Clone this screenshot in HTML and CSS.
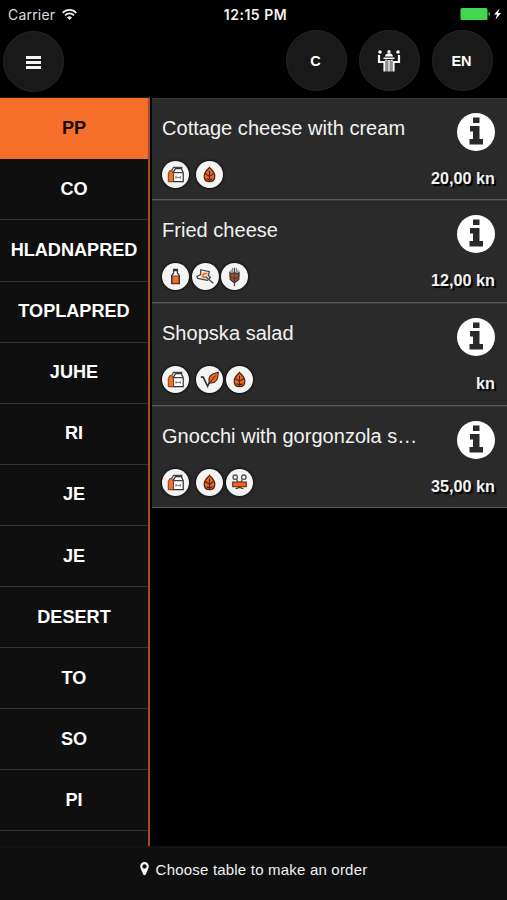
FILE: index.html
```html
<!DOCTYPE html>
<html lang="en">
<head>
  <meta charset="UTF-8" />
  <meta name="viewport" content="width=device-width, initial-scale=1.0"/>
  <title>Menu</title>
  <link rel="stylesheet" href="styles.css">
</head>
<body>

  <!-- shared icons -->
  <svg class="sprite" width="0" height="0">
    <symbol id="info" viewBox="0 0 38 38">
      <circle cx="19" cy="19" r="19" fill="#fff"/>
      <path fill="#2a2a2a" d="M16 4.500h6.500v5.500H16zM13 13h9.500v13h3.500v5.500H12.500V26H16v-7.500h-3z"/>
    </symbol>
    <symbol id="milk" viewBox="0 0 28 28">
      <path fill="#fff" stroke="#333" stroke-width="1.300" d="M11.500 12l2.500-4h6l2 4v9.500H11.500z"/>
      <path fill="none" stroke="#444" stroke-width="1.300" d="M10 10l2-3.500h8.500V8M11.500 12H22"/>
      <path fill="none" stroke="#777" d="M14.500 15.500v3M19 15.500v3M14.500 17h4.500"/>
      <path fill="#f4702a" stroke="#70351a" d="M6.500 21.500V13l1.500-3h2l2 3v8.500z"/>
    </symbol>
    <symbol id="nut" viewBox="0 0 28 28">
      <path fill="#f0641e" stroke="#4b2816" stroke-width="1.300" d="M14 6.500c2 2.500 5.500 5 5.500 9S17 21.500 14 21.500s-5.500-2-5.500-6 3.500-6.500 5.500-9z"/>
      <path fill="none" stroke="#4b2816" stroke-width="1.200" d="M14 10v11M9.500 13l4.500 3 4.500-3M11 18.500l3 1 3-1"/>
    </symbol>
    <symbol id="bottle" viewBox="0 0 28 28">
      <path fill="#fff" stroke="#333" stroke-width="1.300" d="M12 6.500h4v4l2 2.500v8.500h-8V13l2-2.500z"/>
      <path fill="#f4702a" stroke="#70351a" d="M10.500 13.500h7v7.500h-7z"/>
      <path stroke="#333" stroke-width="2" d="M11.500 7.500h5"/>
    </symbol>
    <symbol id="flour" viewBox="0 0 28 28">
      <path fill="#f6e8e0" stroke="#444" stroke-width="1.300" d="M9 7l9 2-1 4 2 2-3 3-10-2-1-2 4-2z"/>
      <path fill="none" stroke="#f4702a" stroke-width="2" d="M16 11l-4 0-1 3 3 1.500"/>
      <path stroke="#555" stroke-width="1.700" d="M14 14l8 7"/>
    </symbol>
    <symbol id="wheat" viewBox="0 0 28 28">
      <path fill="#c2481a" stroke="#333" stroke-width="1.200" d="M14 10l3 1 1.500-1v7L14 20.500 9.500 17v-7l1.500 1z"/>
      <path fill="none" stroke="#444" stroke-width="1.300" d="M14 5v19M9.500 9v5l4.500 3 4.500-3V9"/>
      <path stroke="#888" stroke-width="1.200" d="M12 5v5M16 5v5M10.500 7v3M17.500 7v3"/>
    </symbol>
    <symbol id="vegan" viewBox="0 0 28 28">
      <path fill="none" stroke="#333" stroke-width="1.700" d="M5 11.500h2.500L12 21l2-4"/>
      <path fill="#f0641e" stroke="#4b2816" stroke-width="1.200" d="M14 17.500C12 10.500 16 8 23 6.500c0 7-2 12-9 11z"/>
      <path stroke="#4b2816" d="M12.500 20L20 10"/>
    </symbol>
    <symbol id="salad" viewBox="0 0 28 28">
      <path fill="none" stroke="#555" stroke-width="1.400" d="M13 14.500L10.500 10M15 14.500l2.500-4.500"/>
      <circle cx="9.500" cy="8.500" r="2.300" fill="#fff" stroke="#555" stroke-width="1.400"/>
      <circle cx="18.500" cy="8.500" r="2.300" fill="#fff" stroke="#555" stroke-width="1.400"/>
      <path fill="#f0641e" stroke="#4b2816" stroke-width="1.100" d="M7 13.500h14v5H7z"/>
      <path fill="none" stroke="#4b2816" stroke-width="1.300" d="M10 20.500l4-1.500 4 1.500"/>
    </symbol>
  </svg>

  <div class="status-bar">
    <div class="carrier">
      <span>Carrier</span>
      <svg width="15" height="11" viewBox="0 0 15 11" fill="none" stroke="#eee" stroke-width="1.700">
        <path d="M.7 3.800a9.500 9.500 0 0 1 13.600 0M3 6.300a6.200 6.200 0 0 1 9 0"/>
        <path fill="#eee" stroke="none" d="M7.500 11L5 8.400a3.600 3.600 0 0 1 5 0z"/>
      </svg>
    </div>
    <div class="time">12:15 PM</div>
    <div class="battery">
      <svg width="42" height="14" viewBox="0 0 42 14">
        <rect x="0.500" y="1" width="27" height="12" rx="1.500" fill="#43d650"/>
        <path fill="#43d650" d="M28.500 5.500H30v3h-1.500z"/>
        <path fill="#fff" d="M39.500 1.500L34 7.500h3l-1.500 5 5.500-6.500h-3z"/>
      </svg>
    </div>
  </div>

  <div class="toolbar">
    <button class="round menu-btn" aria-label="Menu"><span class="bars"></span></button>
    <div class="actions">
      <button class="round">C</button>
      <button class="round" aria-label="Tables">
        <svg width="24" height="24" viewBox="0 0 24 24" fill="#f5f5f5">
          <circle cx="3" cy="3" r="1.800"/>
          <circle cx="12" cy="2.700" r="1.700"/>
          <circle cx="21" cy="3" r="1.800"/>
          <path d="M8 7.500c0-4.500 8-4.500 8 0zM6.500 8.500h11V10h-11z"/>
          <path d="M11.200 11h1.600v11.500h-1.600z"/>
          <path fill="none" stroke="#f5f5f5" stroke-width="2.200" d="M2 6v7h5.500v9.500M22 6v7h-5.500v9.500"/>
          <path fill="none" stroke="#f5f5f5" stroke-width="1.100" d="M8 11.200h2v11.300M16 11.200h-2v11.300"/>
        </svg>
      </button>
      <button class="round">EN</button>
    </div>
  </div>

  <div class="main">
    <div class="categories">
      <div class="category active">PP</div>
      <div class="category">CO</div>
      <div class="category">HLADNAPRED</div>
      <div class="category">TOPLAPRED</div>
      <div class="category">JUHE</div>
      <div class="category">RI</div>
      <div class="category">JE</div>
      <div class="category">JE</div>
      <div class="category">DESERT</div>
      <div class="category">TO</div>
      <div class="category">SO</div>
      <div class="category">PI</div>
      <div class="category"></div>
    </div>

    <div class="dishes">
      <div class="dish">
        <div class="dish-row">
          <h3>Cottage cheese with cream</h3>
          <svg class="info"><use href="#info"/></svg>
        </div>
        <div class="dish-row bottom">
          <div class="tags">
            <svg class="tag"><use href="#milk"/></svg>
            <svg class="tag gap"><use href="#nut"/></svg>
          </div>
          <span class="price">20,00 kn</span>
        </div>
      </div>
      <div class="dish">
        <div class="dish-row">
          <h3>Fried cheese</h3>
          <svg class="info"><use href="#info"/></svg>
        </div>
        <div class="dish-row bottom">
          <div class="tags">
            <svg class="tag"><use href="#bottle"/></svg>
            <svg class="tag"><use href="#flour"/></svg>
            <svg class="tag"><use href="#wheat"/></svg>
          </div>
          <span class="price">12,00 kn</span>
        </div>
      </div>
      <div class="dish">
        <div class="dish-row">
          <h3>Shopska salad</h3>
          <svg class="info"><use href="#info"/></svg>
        </div>
        <div class="dish-row bottom">
          <div class="tags">
            <svg class="tag"><use href="#milk"/></svg>
            <svg class="tag gap"><use href="#vegan"/></svg>
            <svg class="tag"><use href="#nut"/></svg>
          </div>
          <span class="price">kn</span>
        </div>
      </div>
      <div class="dish">
        <div class="dish-row">
          <h3>Gnocchi with gorgonzola s…</h3>
          <svg class="info"><use href="#info"/></svg>
        </div>
        <div class="dish-row bottom">
          <div class="tags">
            <svg class="tag"><use href="#milk"/></svg>
            <svg class="tag gap"><use href="#nut"/></svg>
            <svg class="tag"><use href="#salad"/></svg>
          </div>
          <span class="price">35,00 kn</span>
        </div>
      </div>
    </div>
  </div>

  <div class="footer">
    <svg width="9" height="14" viewBox="0 0 9 14">
      <path fill="#fff" fill-rule="evenodd" d="M4.500 0A4.300 4.300 0 0 0 .2 4.300C.2 7 2.500 10 3.300 12.500q1.200 1.500 2.400 0C6.500 10 8.800 7 8.800 4.300A4.300 4.300 0 0 0 4.500 0zm0 2.200a2.200 2.200 0 1 1 0 4.400 2.200 2.200 0 0 1 0-4.400z"/>
    </svg>
    <span>Choose table to make an order</span>
  </div>

</body>
</html>
```
FILE: styles.css
```css
* {
  box-sizing: border-box;
}

body {
  margin: 0;
  height: 900px;
  display: flex;
  flex-direction: column;
  overflow: hidden;
  background-color: #000;
  color: #f2f2f2;
  font-family: "Liberation Sans", Arial, sans-serif;
}

.sprite {
  display: none;
}

.status-bar {
  height: 28px;
  padding: 0 5px 0 8px;
  display: grid;
  grid-template-columns: 1fr auto 1fr;
  align-items: center;
  font-family: Inter, sans-serif;
  font-size: 14px;
}

.carrier {
  display: flex;
  align-items: center;
  gap: 7px;
  color: #ddd;
  letter-spacing: 0.2px;
}

.time {
  padding-left: 1px;
  font-weight: 600;
  font-size: 14px;
  letter-spacing: 0.5px;
}

.battery {
  display: flex;
  justify-content: flex-end;
}

.toolbar {
  height: 69px;
  padding: 2px 14px 0 3px;
  display: flex;
  justify-content: space-between;
}

.actions {
  display: flex;
  gap: 12px;
}

.round {
  width: 61px;
  height: 61px;
  padding: 1px 0 0;
  display: flex;
  align-items: center;
  justify-content: center;
  border: 1px solid #262626;
  border-radius: 50%;
  background-color: #191919;
  color: #fff;
  font-family: "Liberation Sans", Arial, sans-serif;
  font-size: 14.5px;
  font-weight: bold;
}

.actions .round {
  padding-right: 2px;
}

.menu-btn {
  margin-top: 1px;
}

.bars {
  width: 15px;
  height: 13px;
  background: repeating-linear-gradient(#f5f5f5 0 3px, transparent 3px 5px);
}

.main {
  flex: 1;
  min-height: 0;
  display: flex;
}

.categories {
  width: 150px;
  overflow: hidden;
  border-top: 1px solid #1c1c1c;
  border-right: 2px solid #a34a20;
  background-color: #0f0f0f;
}

.category {
  height: 61.1px;
  display: flex;
  align-items: center;
  justify-content: center;
  border-bottom: 1px solid #333;
  font-size: 18.1px;
  font-weight: bold;
  color: #fff;
}

.category.active {
  height: 61.4px;
  border-color: #f66f2a;
  background-color: #f66f2a;
  color: #150a05;
}

.dishes {
  flex: 1;
  min-width: 0;
  padding: 0.6px 0 0 2px;
}

.dish {
  height: 102.7px;
  padding: 14px 12px 0 10px;
  border-top: 1px solid #3a3a3a;
  border-bottom: 1px solid #5a5a5a;
  background-color: #2a2a2a;
}

.dish-row {
  display: flex;
  justify-content: space-between;
}

.dish-row h3 {
  margin: 3px 0 0;
  font-size: 20px;
  font-weight: normal;
  line-height: 24px;
  letter-spacing: 0.03px;
  white-space: nowrap;
}

.info {
  width: 38px;
  height: 38px;
}

.bottom {
  margin-top: 10px;
}

.tags {
  display: flex;
  gap: 3px;
}

.tag {
  width: 27px;
  height: 27px;
  margin-right: -0.5px;
  border-radius: 50%;
  background-color: #f4f4f4;
  box-shadow: 0 0 2px 1px #111;
}

.tag.gap {
  margin-left: 4.5px;
}

.price {
  margin-top: 8px;
  font-size: 16.2px;
  font-weight: bold;
  line-height: 18px;
  text-shadow: 2px 2px 1px #000;
}

.footer {
  height: 54px;
  padding-bottom: 10px;
  display: flex;
  align-items: center;
  justify-content: center;
  gap: 7px;
  border-top: 2px solid #141414;
  background-color: #0f0f0f;
  font-size: 15px;
  letter-spacing: 0.2px;
}
```
